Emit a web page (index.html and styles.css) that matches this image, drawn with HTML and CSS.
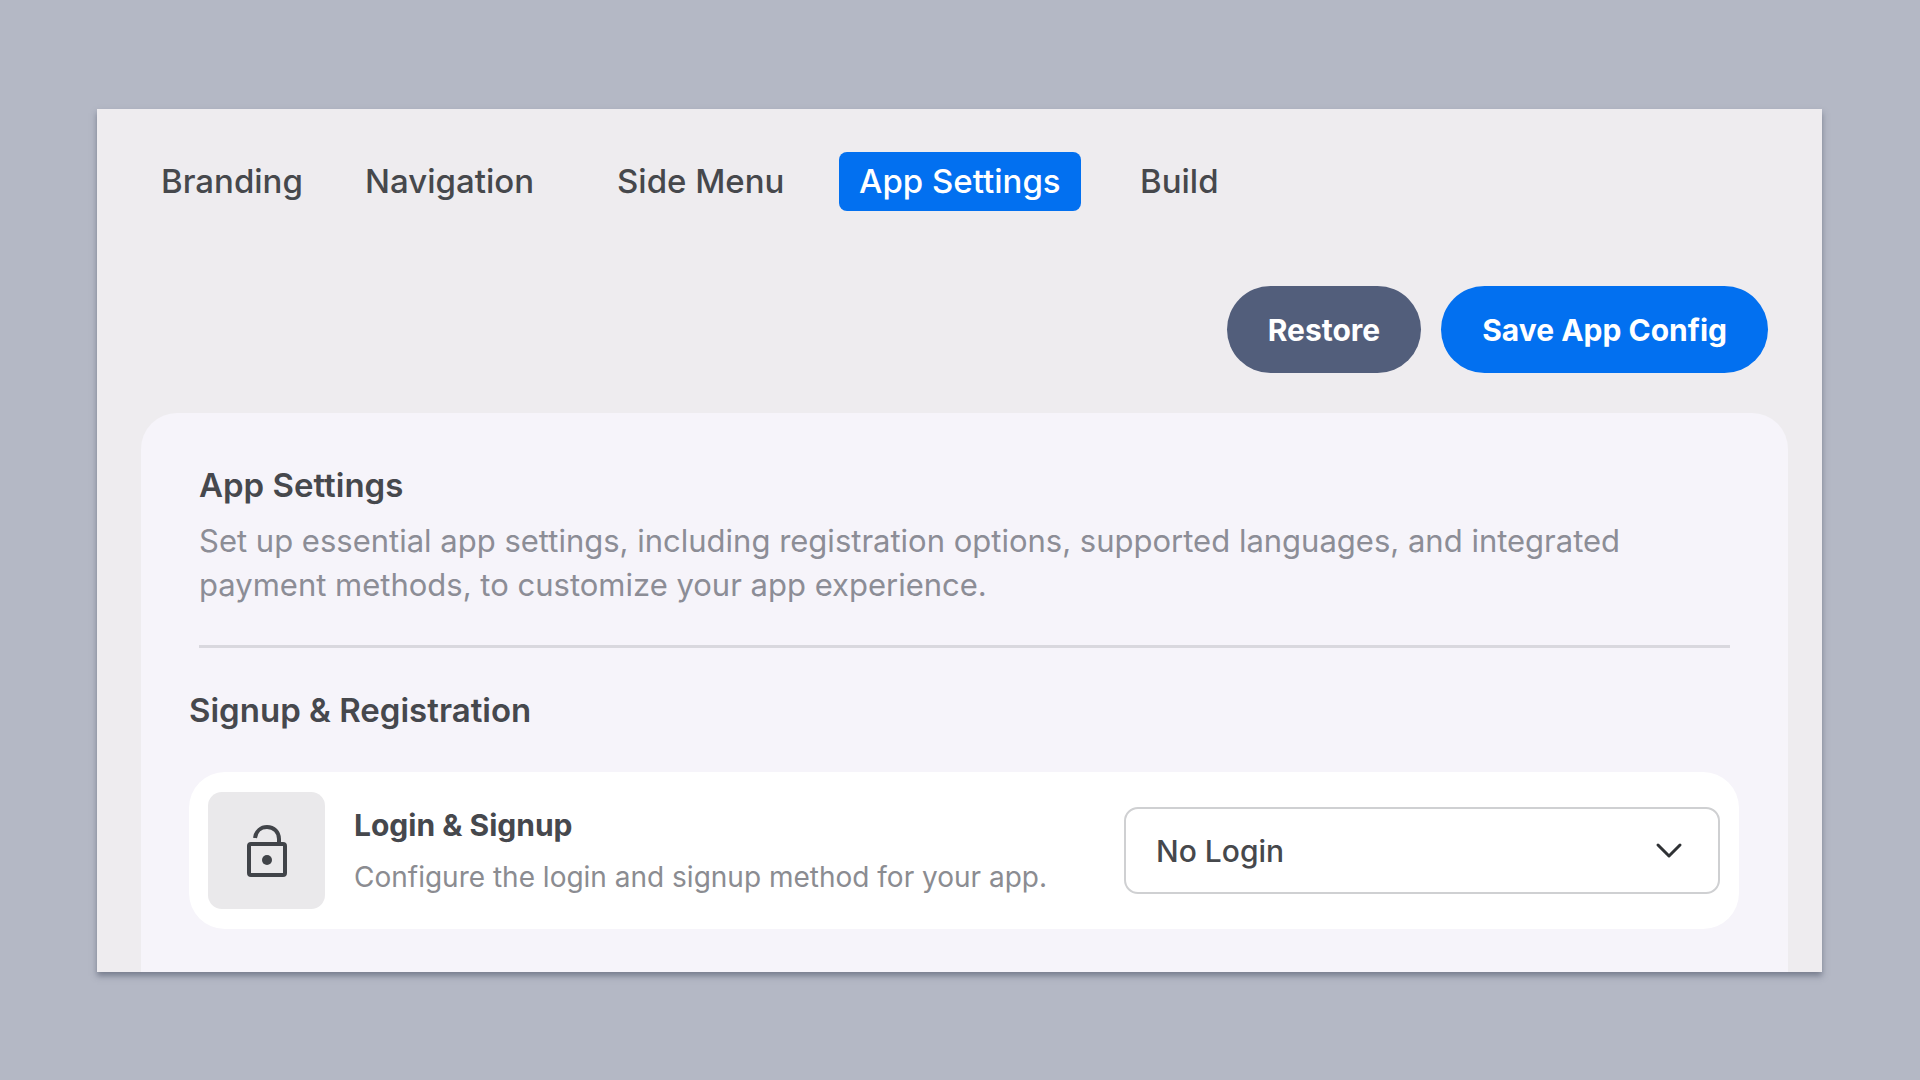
FILE: index.html
```html
<!DOCTYPE html>
<html lang="en">
<head>
<meta charset="utf-8">
<meta name="viewport" content="width=device-width, initial-scale=1">
<title>App Settings</title>
<link rel="stylesheet" href="styles.css">
</head>
<body>
<main class="window">
  <nav class="tabs" aria-label="App configuration">
    <a class="tab" href="#branding">Branding</a>
    <a class="tab" href="#navigation">Navigation</a>
    <a class="tab" href="#side-menu">Side Menu</a>
    <a class="tab tab-active" href="#app-settings" aria-current="page">App Settings</a>
    <a class="tab" href="#build">Build</a>
  </nav>
  <div class="actions">
    <button class="button button-restore" type="button">Restore</button>
    <button class="button button-save" type="button">Save App Config</button>
  </div>
  <section class="card" id="app-settings">
    <header class="intro">
      <h1 class="title">App Settings</h1>
      <p class="lead">Set up essential app settings, including registration options, supported languages, and integrated payment methods, to customize your app experience.</p>
    </header>
    <h2 class="section-title">Signup &amp; Registration</h2>
    <div class="setting">
      <span class="setting-icon">
        <svg viewBox="0 0 42 54" width="42" height="54" fill="none" stroke="#414449" stroke-width="4" aria-hidden="true">
          <rect x="3" y="20" width="36" height="31" rx="2"/>
          <path d="M9 14C10 7 15 3 21 3c7 0 12 5 12 12v5"/>
          <circle cx="21" cy="36" r="5" fill="#414449" stroke="none"/>
        </svg>
      </span>
      <div class="setting-text">
        <label class="setting-name" for="login-method">Login &amp; Signup</label>
        <p class="setting-note">Configure the login and signup method for your app.</p>
      </div>
      <div class="select-wrap">
        <select class="select" id="login-method">
          <option>No Login</option>
        </select>
        <svg class="chevron" viewBox="0 0 30 20" width="30" height="20" fill="none" stroke="#2f3235" stroke-width="3" stroke-linecap="round" stroke-linejoin="round" aria-hidden="true">
          <path d="M4 4l11 11L26 4"/>
        </svg>
      </div>
    </div>
  </section>
</main>
</body>
</html>
```
FILE: styles.css
```css
* {
  box-sizing: border-box;
}

body {
  margin: 0;
  min-height: 100vh;
  padding: 109px 98px 108px 97px;
  display: flex;
  background: #b4b8c5;
  color: #46484d;
  font-family: Inter, "Noto Sans", sans-serif;
}

h1, h2, p {
  margin: 0;
}

.window {
  flex: 1;
  min-width: 0;
  display: flex;
  flex-direction: column;
  padding: 43px 34px 0 44px;
  background: #eeecef;
  box-shadow: 0 4px 6px rgba(60, 68, 88, 0.5);
}

.tabs {
  display: grid;
  grid-template-columns: 204px 252px 242px 281px auto;
  justify-items: start;
}

.tab {
  padding: 0 20px;
  border-radius: 8px;
  color: #46484c;
  font-size: 33px;
  font-weight: 500;
  line-height: 59px;
  text-decoration: none;
  white-space: nowrap;
}

.tab-active {
  background: #0270f0;
  color: #fff;
}

.actions {
  display: flex;
  justify-content: flex-end;
  gap: 20px;
  padding: 75px 20px 40px 0;
}

.button {
  height: 87px;
  padding: 0 41px;
  border: 0;
  border-radius: 44px;
  color: #fff;
  font-family: inherit;
  font-size: 30px;
  font-weight: 700;
  white-space: nowrap;
}

.button-restore {
  background: #525e7b;
}

.button-save {
  background: #0270f0;
}

.card {
  flex: 1;
  padding: 48px 49px 43px 48px;
  border-radius: 36px 36px 0 0;
  background: #f6f4fa;
}

.intro {
  margin: 0 9px 0 10px;
  padding-bottom: 38px;
  border-bottom: 3px solid #d9d8de;
}

.title {
  padding-bottom: 10px;
  font-size: 33px;
  font-weight: 600;
  line-height: 48px;
}

.lead {
  color: #8c8d96;
  font-size: 31px;
  line-height: 44px;
}

.section-title {
  padding: 38px 0;
  font-size: 33px;
  font-weight: 600;
  line-height: 48px;
}

.setting {
  display: flex;
  align-items: center;
  padding: 20px 19px;
  border-radius: 36px;
  background: #fff;
}

.setting-icon {
  flex: none;
  display: grid;
  place-items: center;
  width: 117px;
  height: 117px;
  border-radius: 14px;
  background: #eae9eb;
}

.setting-text {
  flex: 1;
  min-width: 0;
  padding-left: 29px;
}

.setting-name {
  display: block;
  font-size: 30px;
  font-weight: 700;
  line-height: 52px;
}

.setting-note {
  color: #8b8c91;
  font-size: 28px;
  line-height: 52px;
}

.select-wrap {
  position: relative;
  flex: none;
  width: 596px;
}

.select {
  appearance: none;
  display: block;
  width: 100%;
  height: 87px;
  padding: 0 72px 0 30px;
  border: 2px solid #cfd0d2;
  border-radius: 14px;
  background: #fff;
  color: #46484c;
  font-family: inherit;
  font-size: 30px;
  font-weight: 500;
}

.chevron {
  position: absolute;
  right: 36px;
  top: 34px;
  pointer-events: none;
}
```
